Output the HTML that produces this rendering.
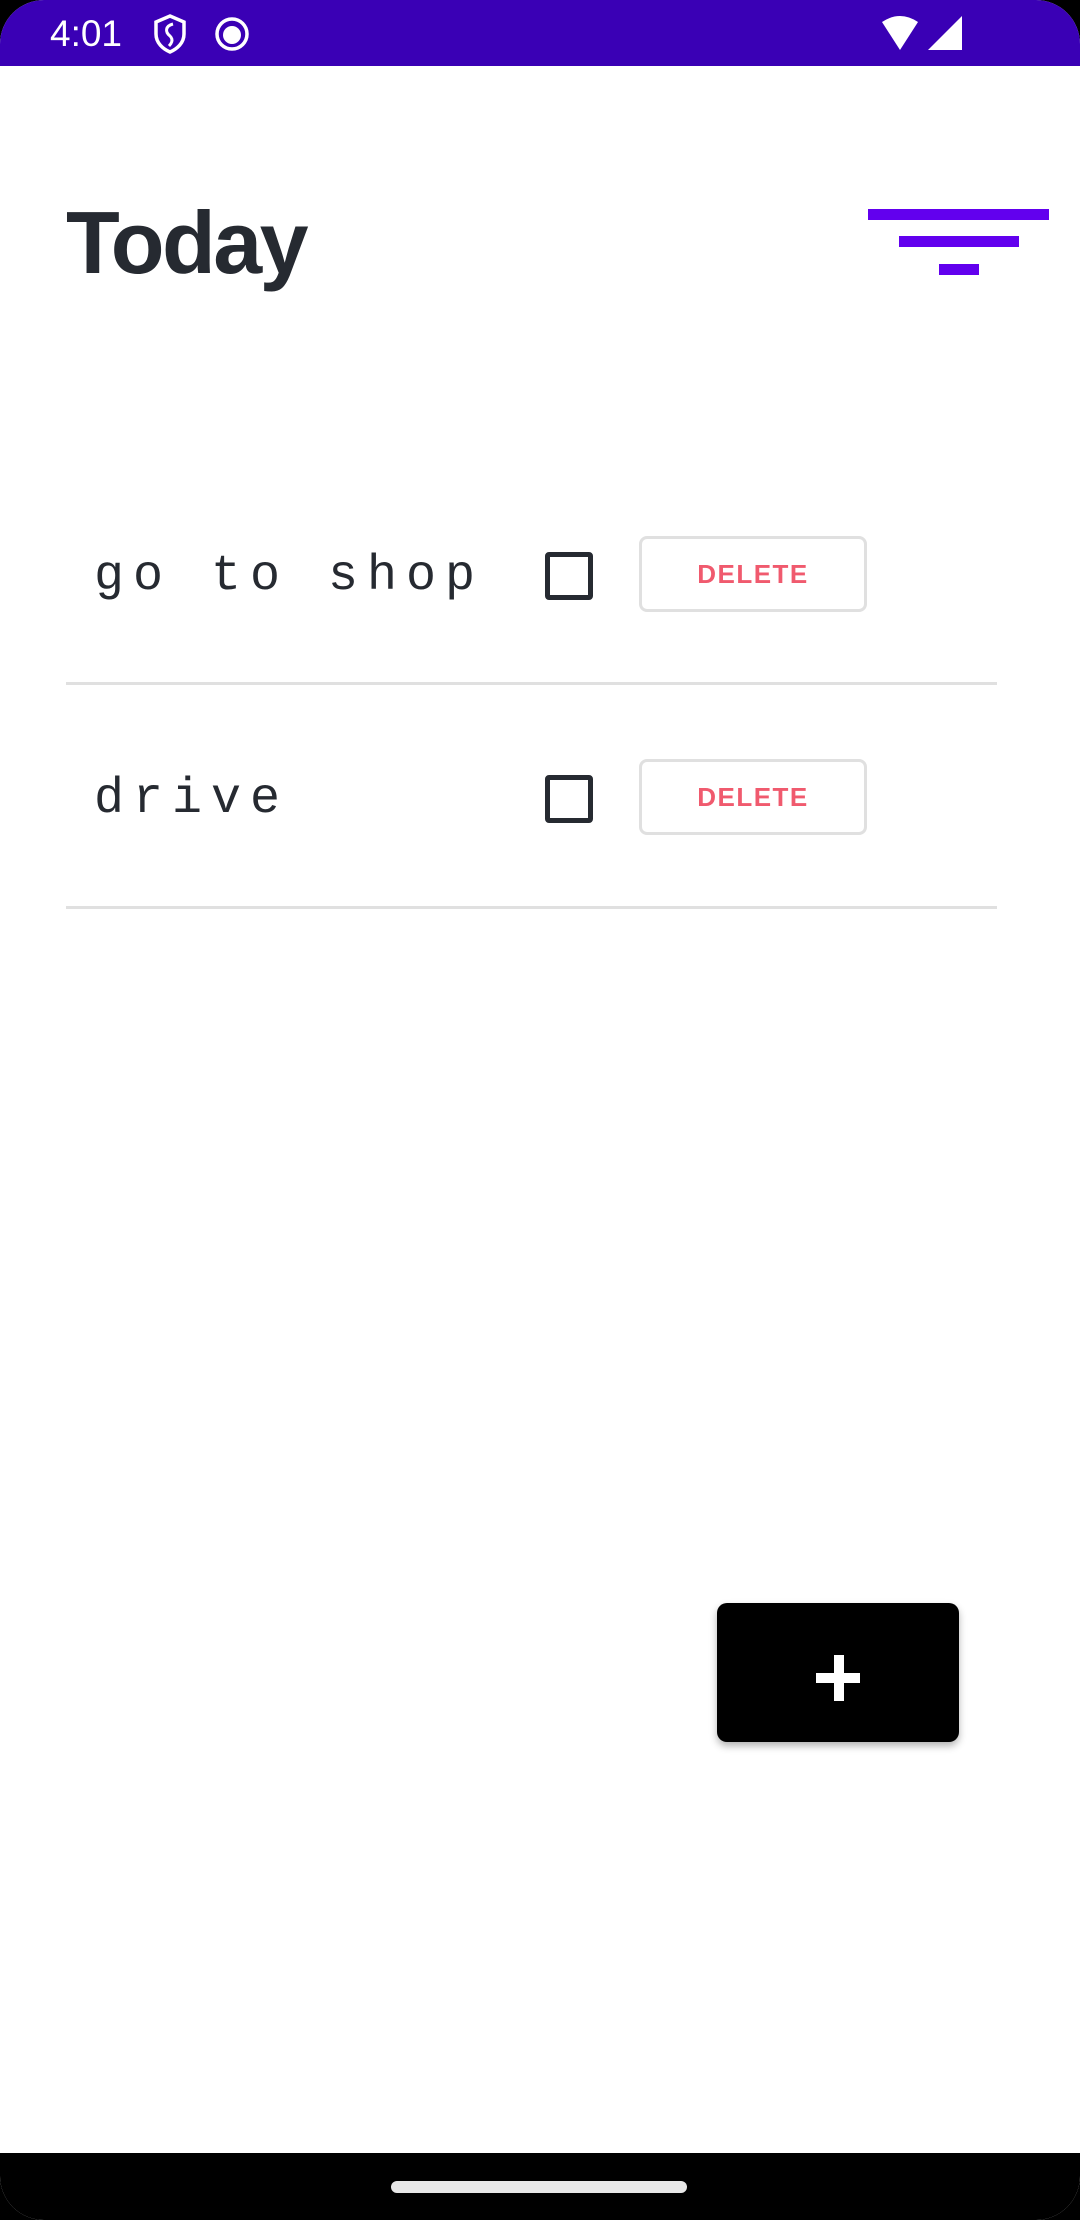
<!DOCTYPE html>
<html><head><meta charset="utf-8"><style>
*{margin:0;padding:0;box-sizing:border-box}
html,body{width:1080px;height:2220px;background:#000;overflow:hidden}
#screen{position:absolute;left:0;top:0;width:1080px;height:2220px;background:#fff;border-radius:44px;overflow:hidden}
.sb{position:absolute;left:0;top:0;width:1080px;height:66px;background:#3a00b5}
.abs{position:absolute}
.title{position:absolute;left:66px;top:199px;font-family:"Liberation Sans",sans-serif;font-size:88px;font-weight:bold;letter-spacing:-2.5px;color:#262a31;line-height:1}
.bar{position:absolute;background:#6200ee}
.task{position:absolute;left:94px;font-family:"Liberation Mono",monospace;font-size:50px;letter-spacing:9px;color:#262a31;line-height:1}
.cb{position:absolute;left:545px;width:48px;height:48px;border:5px solid #262a31;border-radius:4px}
.del{position:absolute;left:639px;width:228px;height:76px;border:3px solid #e0e0e0;border-radius:8px;color:#f05a6e;font-family:"Liberation Sans",sans-serif;font-size:26px;font-weight:bold;letter-spacing:1.5px;text-align:center;line-height:70px}
.hr{position:absolute;left:66px;width:931px;height:3px;background:#e0e0e0}
</style></head><body>
<div id="screen">
<div class="sb"></div>
<div class="abs" style="left:50px;top:12px;font-family:'Liberation Sans',sans-serif;font-size:37px;color:#fff;line-height:44px">4:01</div>
<svg class="abs" style="left:153px;top:14px" width="34" height="40" viewBox="0 0 34 40"><path d="M17 2 L31 8 V20 C31 29 24 35 17 38 C10 35 3 29 3 20 V8 Z" fill="none" stroke="#fff" stroke-width="3.5"/><path d="M20 10 C12 12 12 18 17 22 C21 26 18 30 16 32" fill="none" stroke="#fff" stroke-width="3"/></svg>
<svg class="abs" style="left:214px;top:16px" width="36" height="36" viewBox="0 0 36 36"><circle cx="18" cy="18" r="15" fill="none" stroke="#fff" stroke-width="3.5"/><circle cx="18" cy="19" r="9" fill="#fff"/></svg>
<svg class="abs" style="left:880px;top:14px" width="90" height="38" viewBox="0 0 90 38"><path d="M2 8 Q20 -4 38 8 L20 36 Z" fill="#fff"/><path d="M82 2 V36 H48 Z" fill="#fff"/></svg>
<div class="title">Today</div>
<div class="bar" style="left:868px;top:209px;width:181px;height:11px"></div>
<div class="bar" style="left:899px;top:236px;width:120px;height:11px"></div>
<div class="bar" style="left:939px;top:264px;width:40px;height:11px"></div>

<div class="task" style="top:552px">go to shop</div>
<div class="cb" style="top:552px"></div>
<div class="del" style="top:536px">DELETE</div>
<div class="hr" style="top:682px"></div>

<div class="task" style="top:775px">drive</div>
<div class="cb" style="top:775px"></div>
<div class="del" style="top:759px">DELETE</div>
<div class="hr" style="top:906px"></div>

<div class="abs" style="left:717px;top:1603px;width:242px;height:139px;background:#000;border-radius:10px;box-shadow:0 4px 8px rgba(0,0,0,0.3)"></div>
<div class="abs" style="left:816px;top:1673px;width:44px;height:10px;background:#fff"></div>
<div class="abs" style="left:834px;top:1655px;width:10px;height:46px;background:#fff"></div>

<div class="abs" style="left:0;top:2153px;width:1080px;height:67px;background:#000"></div>
<div class="abs" style="left:391px;top:2181px;width:296px;height:12px;background:#e8e8e8;border-radius:6px"></div>
</div>
</body></html>
